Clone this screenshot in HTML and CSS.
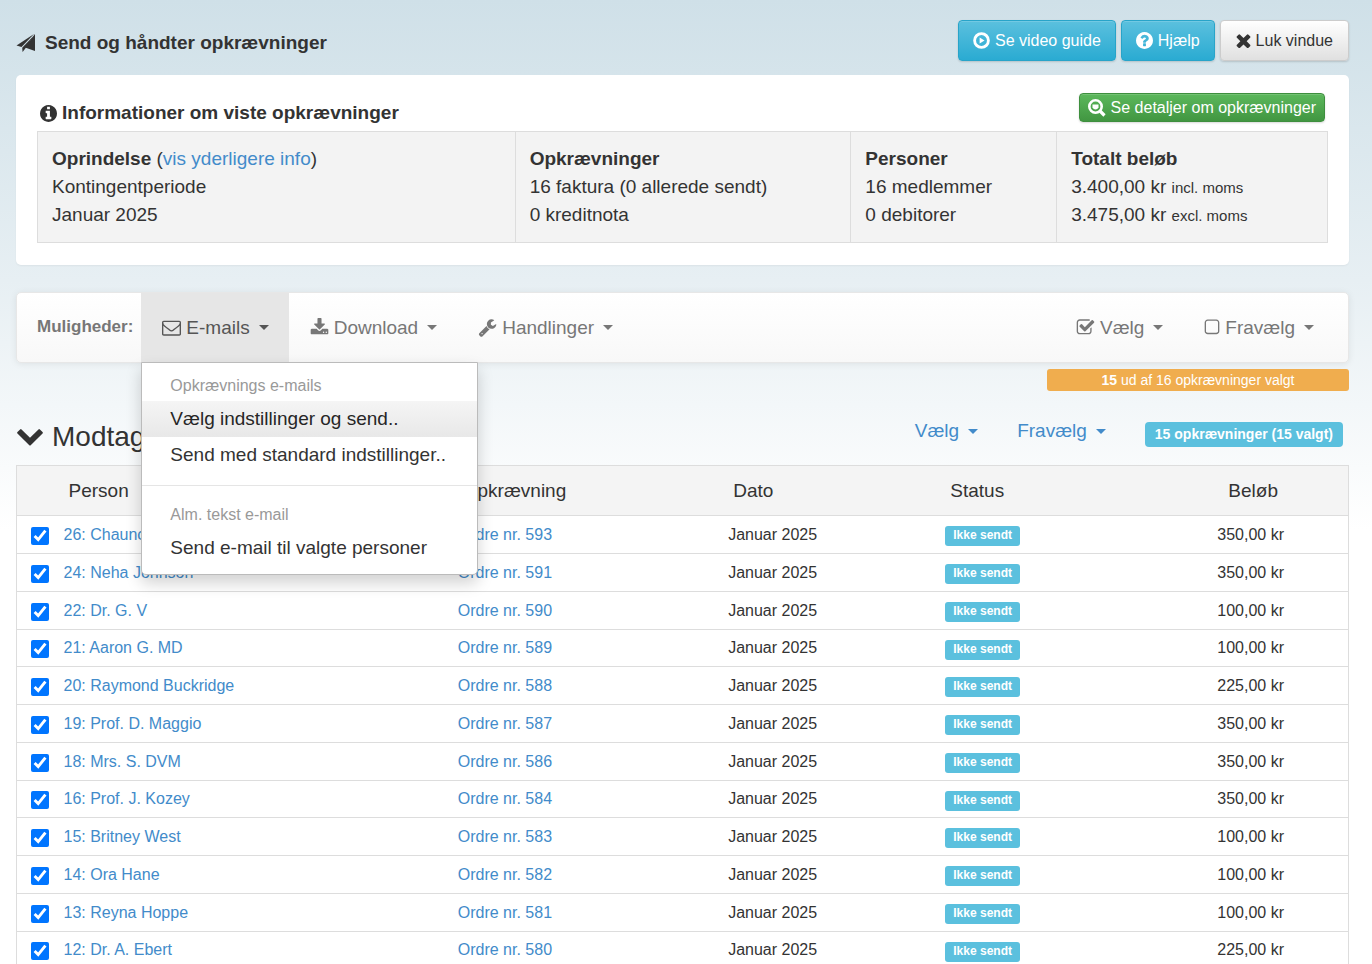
FILE: index.html
```html
<!DOCTYPE html>
<html lang="da">
<head>
<meta charset="utf-8">
<title>Send og håndter opkrævninger</title>
<link rel="stylesheet" href="styles.css">
</head>
<body>
<svg class="sprite" aria-hidden="true">
  <symbol id="i-plane" viewBox="0 0 20 20"><path d="M0.500 12.500L18 1L5.500 14z"/><path d="M19 1V18L9 14.600z"/><path d="M6.200 14.700L18 2.500L9.300 15.500L6.600 19z"/></symbol>
  <symbol id="i-info" viewBox="128 128 1536 1536"><path d="M1152 1376v-160q0-14-9-23t-23-9h-96v-512q0-14-9-23t-23-9h-320q-14 0-23 9t-9 23v160q0 14 9 23t23 9h96v320h-96q-14 0-23 9t-9 23v160q0 14 9 23t23 9h448q14 0 23-9t9-23zm-128-896v-160q0-14-9-23t-23-9h-192q-14 0-23 9t-9 23v160q0 14 9 23t23 9h192q14 0 23-9t9-23zm640 416q0 209-103 385.500t-279.500 279.500-385.500 103-385.500-103-279.500-279.500-103-385.500 103-385.500 279.500-279.500 385.500-103 385.500 103 279.500 279.500 103 385.500z"/></symbol>
  <symbol id="i-question" viewBox="128 128 1536 1536"><path d="M1024 1376v-192q0-14-9-23t-23-9h-192q-14 0-23 9t-9 23v192q0 14 9 23t23 9h192q14 0 23-9t9-23zm256-672q0-88-55.500-163t-138.500-116-170-41q-243 0-371 213-15 24 8 42l132 100q7 6 19 6 16 0 25-12 53-68 86-92 34-24 86-24 48 0 85.500 26t37.500 59q0 38-20 61t-68 45q-63 28-115.500 86.500t-52.500 125.500v36q0 14 9 23t23 9h192q14 0 23-9t9-23q0-19 21.500-49.500t54.500-49.500q32-18 49-28.500t46-35 44.500-48 28-60.500 12.500-81zm384 192q0 209-103 385.500t-279.500 279.500-385.500 103-385.500-103-279.500-279.500-103-385.500 103-385.500 279.500-279.500 385.500-103 385.500 103 279.500 279.500 103 385.500z"/></symbol>
  <symbol id="i-play" viewBox="0 0 18 18"><circle cx="9" cy="9" r="7.300" fill="none" stroke="currentColor" stroke-width="3"/><path d="M7 5.800v6.400L12.200 9z"/></symbol>
  <symbol id="i-times" viewBox="250 250 1292 1292"><path d="M1490 1322q0 40-28 68l-136 136q-28 28-68 28t-68-28l-294-294-294 294q-28 28-68 28t-68-28l-136-136q-28-28-28-68t28-68l294-294-294-294q-28-28-28-68t28-68l136-136q28-28 68-28t68 28l294 294 294-294q28-28 68-28t68 28l136 136q28 28 28 68t-28 68l-294 294 294 294q28 28 28 68z"/></symbol>
  <symbol id="i-search" viewBox="0 0 18 18"><circle cx="7.500" cy="7.500" r="6.200" fill="none" stroke="currentColor" stroke-width="2.600"/><path d="M4.500 5.500h6v3q-1 2-3 2t-3-2z"/><path d="M12 12l4.500 4.500" stroke="currentColor" stroke-width="3.200" fill="none"/></symbol>
  <symbol id="i-mail" viewBox="0 0 1792 1792"><path d="M1664 1504v-768q-32 36-69 66-268 206-426 338-51 43-83 67t-86.500 48.500-102.500 24.500h-2q-48 0-102.500-24.500t-86.500-48.500-83-67q-158-132-426-338-37-30-69-66v768q0 13 9.500 22.500t22.500 9.500h1472q13 0 22.500-9.500t9.500-22.500zm0-1051v-24.500l-.5-13-3-12.500-5.500-9-9-7.500-14-2.500h-1472q-13 0-22.500 9.500t-9.500 22.500q0 168 147 284 193 152 401 317 6 5 35 29.500t46 37.500 44.500 31.500 50.500 27.500 43 9h2q20 0 43-9t50.500-27.500 44.500-31.500 46-37.500 35-29.500q208-165 401-317 54-43 100.500-115.500t46.500-131.500zm128-37v1088q0 66-47 113t-113 47h-1472q-66 0-113-47t-47-113v-1088q0-66 47-113t113-47h1472q66 0 113 47t47 113z"/></symbol>
  <symbol id="i-download" viewBox="0 0 1792 1792"><path d="M1344 1344q0-26-19-45t-45-19-45 19-19 45 19 45 45 19 45-19 19-45zm256 0q0-26-19-45t-45-19-45 19-19 45 19 45 45 19 45-19 19-45zm128-224v320q0 40-28 68t-68 28h-1472q-40 0-68-28t-28-68v-320q0-40 28-68t68-28h465l135 136q58 56 136 56t136-56l136-136h464q40 0 68 28t28 68zm-325-569q17 41-14 70l-448 448q-18 19-45 19t-45-19l-448-448q-31-29-14-70 17-39 59-39h256v-448q0-26 19-45t45-19h256q26 0 45 19t19 45v448h256q42 0 59 39z"/></symbol>
  <symbol id="i-wrench" viewBox="0 0 1792 1792"><path d="M448 1472q0-26-19-45t-45-19-45 19-19 45 19 45 45 19 45-19 19-45zm644-420l-682 682q-37 37-90 37-52 0-91-37l-106-108q-38-36-38-90 0-53 38-91l681-681q39 98 114.500 173.500t173.500 114.500zm634-435q0 39-23 106-47 134-164.500 217.500t-258.500 83.500q-185 0-316.500-131.500t-131.500-316.500 131.500-316.500 316.500-131.500q58 0 121.500 16.500t107.500 46.500q16 11 16 28t-16 28l-293 169v224l193 107q5-3 79-48.500t135.500-81 70.500-35.500q15 0 23.500 10t8.500 25z"/></symbol>
  <symbol id="i-check" viewBox="0 0 1792 1792"><path d="M1472 930v318q0 119-84.500 203.500t-203.500 84.500h-832q-119 0-203.500-84.500t-84.500-203.500v-832q0-119 84.500-203.500t203.500-84.500h832q63 0 117 25 15 7 18 23 3 17-9 29l-49 49q-10 10-23 10-3 0-9-2-23-6-45-6h-832q-66 0-113 47t-47 113v832q0 66 47 113t113 47h832q66 0 113-47t47-113v-254q0-13 9-22l64-64q10-10 23-10 6 0 12 3 20 8 20 29zm231-489l-814 814q-24 24-57 24t-57-24l-430-430q-24-24-24-57t24-57l110-110q24-24 57-24t57 24l263 263 647-647q24-24 57-24t57 24l110 110q24 24 24 57t-24 57z"/></symbol>
  <symbol id="i-square" viewBox="128 0 1536 1792"><path d="M1312 256h-832q-66 0-113 47t-47 113v832q0 66 47 113t113 47h832q66 0 113-47t47-113v-832q0-66-47-113t-113-47zm288 160v832q0 119-84.500 203.500t-203.500 84.500h-832q-119 0-203.500-84.500t-84.500-203.500v-832q0-119 84.500-203.500t203.500-84.500h832q119 0 203.500 84.500t84.500 203.500z"/></symbol>
  <symbol id="i-chevron" viewBox="80 480 1632 1100"><path d="M1683 808l-742 741q-19 19-45 19t-45-19l-742-741q-19-19-19-45.500t19-45.500l166-165q19-19 45-19t45 19l531 531 531-531q19-19 45-19t45 19l166 165q19 19 19 45.500t-19 45.500z"/></symbol>
</svg>

<main class="page">
  <header class="top">
    <h1 class="title"><svg class="icon icon-title"><use href="#i-plane"/></svg>Send og håndter opkrævninger</h1>
    <div class="actions">
      <button class="btn btn-info" type="button"><svg class="icon"><use href="#i-play"/></svg>Se video guide</button>
      <button class="btn btn-info" type="button"><svg class="icon"><use href="#i-question"/></svg>Hjælp</button>
      <button class="btn btn-default" type="button"><svg class="icon icon-small"><use href="#i-times"/></svg>Luk vindue</button>
    </div>
  </header>

  <section class="panel">
    <div class="panel-head">
      <h2 class="panel-title"><svg class="icon"><use href="#i-info"/></svg>Informationer om viste opkrævninger</h2>
      <button class="btn btn-success" type="button"><svg class="icon icon-search"><use href="#i-search"/></svg>Se detaljer om opkrævninger</button>
    </div>
    <div class="summary">
      <div class="fact"><strong>Oprindelse</strong> (<a href="#">vis yderligere info</a>)<br>Kontingentperiode<br>Januar 2025</div>
      <div class="fact"><strong>Opkrævninger</strong><br>16 faktura (0 allerede sendt)<br>0 kreditnota</div>
      <div class="fact"><strong>Personer</strong><br>16 medlemmer<br>0 debitorer</div>
      <div class="fact"><strong>Totalt beløb</strong><br>3.400,00 kr <small>incl. moms</small><br>3.475,00 kr <small>excl. moms</small></div>
    </div>
  </section>

  <nav class="navbar">
    <span class="nav-label">Muligheder:</span>
    <div class="dropdown">
      <button class="nav-item is-open" type="button" aria-expanded="true"><svg class="icon icon-nav"><use href="#i-mail"/></svg>E-mails<span class="caret"></span></button>
      <div class="menu">
        <div class="menu-header">Opkrævnings e-mails</div>
        <a class="menu-link is-active" href="#">Vælg indstillinger og send..</a>
        <a class="menu-link" href="#">Send med standard indstillinger..</a>
        <hr class="menu-divider">
        <div class="menu-header">Alm. tekst e-mail</div>
        <a class="menu-link" href="#">Send e-mail til valgte personer</a>
      </div>
    </div>
    <button class="nav-item" type="button"><svg class="icon icon-nav"><use href="#i-download"/></svg>Download<span class="caret"></span></button>
    <button class="nav-item" type="button"><svg class="icon icon-nav"><use href="#i-wrench"/></svg>Handlinger<span class="caret"></span></button>
    <div class="nav-right">
      <button class="nav-item" type="button"><svg class="icon icon-nav"><use href="#i-check"/></svg>Vælg<span class="caret"></span></button>
      <button class="nav-item" type="button"><svg class="icon icon-box"><use href="#i-square"/></svg>Fravælg<span class="caret"></span></button>
    </div>
  </nav>

  <div class="count"><strong>15</strong> ud af 16 opkrævninger valgt</div>

  <div class="list-head">
    <h2 class="list-title"><svg class="icon icon-chevron"><use href="#i-chevron"/></svg>Modtagere</h2>
    <button class="link-btn" type="button">Vælg<span class="caret"></span></button>
    <button class="link-btn" type="button">Fravælg<span class="caret"></span></button>
    <span class="total">15 opkrævninger (15 valgt)</span>
  </div>

  <table class="list">
    <colgroup><col class="c-check"><col class="c-person"><col class="c-order"><col class="c-date"><col class="c-status"><col></colgroup>
    <thead>
      <tr><th></th><th>Person</th><th>Opkrævning</th><th>Dato</th><th>Status</th><th class="amount">Beløb</th></tr>
    </thead>
    <tbody>
      <tr><td><input type="checkbox" checked aria-label="Vælg 26"></td><td><a href="#">26: Chauncey Kling</a></td><td><a href="#">Ordre nr. 593</a></td><td>Januar 2025</td><td><span class="label">Ikke sendt</span></td><td class="amount">350,00 kr</td></tr>
      <tr><td><input type="checkbox" checked aria-label="Vælg 24"></td><td><a href="#">24: Neha Johnson</a></td><td><a href="#">Ordre nr. 591</a></td><td>Januar 2025</td><td><span class="label">Ikke sendt</span></td><td class="amount">350,00 kr</td></tr>
      <tr><td><input type="checkbox" checked aria-label="Vælg 22"></td><td><a href="#">22: Dr. G. V</a></td><td><a href="#">Ordre nr. 590</a></td><td>Januar 2025</td><td><span class="label">Ikke sendt</span></td><td class="amount">100,00 kr</td></tr>
      <tr><td><input type="checkbox" checked aria-label="Vælg 21"></td><td><a href="#">21: Aaron G. MD</a></td><td><a href="#">Ordre nr. 589</a></td><td>Januar 2025</td><td><span class="label">Ikke sendt</span></td><td class="amount">100,00 kr</td></tr>
      <tr><td><input type="checkbox" checked aria-label="Vælg 20"></td><td><a href="#">20: Raymond Buckridge</a></td><td><a href="#">Ordre nr. 588</a></td><td>Januar 2025</td><td><span class="label">Ikke sendt</span></td><td class="amount">225,00 kr</td></tr>
      <tr><td><input type="checkbox" checked aria-label="Vælg 19"></td><td><a href="#">19: Prof. D. Maggio</a></td><td><a href="#">Ordre nr. 587</a></td><td>Januar 2025</td><td><span class="label">Ikke sendt</span></td><td class="amount">350,00 kr</td></tr>
      <tr><td><input type="checkbox" checked aria-label="Vælg 18"></td><td><a href="#">18: Mrs. S. DVM</a></td><td><a href="#">Ordre nr. 586</a></td><td>Januar 2025</td><td><span class="label">Ikke sendt</span></td><td class="amount">350,00 kr</td></tr>
      <tr><td><input type="checkbox" checked aria-label="Vælg 16"></td><td><a href="#">16: Prof. J. Kozey</a></td><td><a href="#">Ordre nr. 584</a></td><td>Januar 2025</td><td><span class="label">Ikke sendt</span></td><td class="amount">350,00 kr</td></tr>
      <tr><td><input type="checkbox" checked aria-label="Vælg 15"></td><td><a href="#">15: Britney West</a></td><td><a href="#">Ordre nr. 583</a></td><td>Januar 2025</td><td><span class="label">Ikke sendt</span></td><td class="amount">100,00 kr</td></tr>
      <tr><td><input type="checkbox" checked aria-label="Vælg 14"></td><td><a href="#">14: Ora Hane</a></td><td><a href="#">Ordre nr. 582</a></td><td>Januar 2025</td><td><span class="label">Ikke sendt</span></td><td class="amount">100,00 kr</td></tr>
      <tr><td><input type="checkbox" checked aria-label="Vælg 13"></td><td><a href="#">13: Reyna Hoppe</a></td><td><a href="#">Ordre nr. 581</a></td><td>Januar 2025</td><td><span class="label">Ikke sendt</span></td><td class="amount">100,00 kr</td></tr>
      <tr><td><input type="checkbox" checked aria-label="Vælg 12"></td><td><a href="#">12: Dr. A. Ebert</a></td><td><a href="#">Ordre nr. 580</a></td><td>Januar 2025</td><td><span class="label">Ikke sendt</span></td><td class="amount">225,00 kr</td></tr>
    </tbody>
  </table>
</main>
</body>
</html>
```

FILE: styles.css
```css
* { box-sizing: border-box; }

body {
  margin: 0;
  background: #fff;
  color: #333;
  font-family: "Liberation Sans", Arial, sans-serif;
  font-size: 19px;
  line-height: 28px;
}

a { color: #428bca; text-decoration: none; }
button { font-family: inherit; cursor: pointer; }
h1, h2 { margin: 0; }

.sprite { display: none; }
.icon { width: 17px; height: 17px; flex: none; fill: currentColor; }

.page {
  height: 100vh;
  overflow: hidden;
  padding: 20px 23px 0 16px;
  background: linear-gradient(#cfe0e8, #e7eff3 280px, #fff 530px);
}

/* Top bar */
.top { display: flex; align-items: center; justify-content: space-between; margin-bottom: 14px; }
.title { display: flex; align-items: center; gap: 9px; padding-top: 4px; font-size: 19px; }
.icon-title { width: 20px; height: 20px; }
.actions { display: flex; gap: 5px; }

.btn {
  display: flex;
  align-items: center;
  gap: 5px;
  padding: 0 14px;
  border: 1px solid;
  border-radius: 4px;
  font-size: 16px;
  line-height: 39px;
  box-shadow: inset 0 1px 0 rgba(255, 255, 255, .15), 0 1px 2px rgba(0, 0, 0, .15);
}
.btn-info { color: #fff; border-color: #28a4c9; background: linear-gradient(#5bc0de, #2aabd2); }
.btn-default { padding: 0 15px; color: #333; border-color: #ccc; background: linear-gradient(#fff, #e0e0e0); }
.btn-success { padding: 0 8px; line-height: 27px; color: #fff; border-color: #3e8f3e; background: linear-gradient(#5cb85c, #419641); }
.icon-small { width: 15px; height: 15px; }
.icon-search { width: 18px; height: 18px; }

/* Info panel */
.panel { padding: 18px 21px 22px; border-radius: 5px; background: #fff; box-shadow: 0 1px 2px rgba(0, 0, 0, .05); }
.panel-head { display: flex; justify-content: space-between; align-items: flex-start; padding: 0 3px 4px; }
.panel-title { display: flex; align-items: center; gap: 5px; padding-top: 6px; font-size: 19px; }
.summary { display: grid; grid-template-columns: 477fr 336fr 206fr 271fr; border: 1px solid #ddd; background: #f3f3f3; }
.fact { padding: 13px 14px; }
.fact + .fact { border-left: 1px solid #ddd; }
.fact small { font-size: 15px; line-height: 1; }

/* Options bar */
.navbar {
  display: flex;
  margin-top: 27px;
  border: 1px solid #e7e7e7;
  border-radius: 5px;
  background: linear-gradient(#fff, #f8f8f8);
  box-shadow: 0 1px 7px rgba(0, 0, 0, .08);
}
.nav-label { padding: 0 8px 0 20px; color: #777; font-size: 17px; font-weight: bold; line-height: 68px; }
.nav-item {
  display: flex;
  align-items: center;
  gap: 5px;
  padding: 0 20px 0 21px;
  border: 0;
  background: none;
  color: #777;
  font-size: 19px;
  line-height: 69px;
}
.nav-item.is-open { color: #555; background: #e6e6e6; }
.icon-nav { width: 19px; height: 19px; }
.icon-box { width: 16px; height: 19px; }
.nav-right { display: flex; margin-left: auto; padding-right: 14px; }
.caret { margin-left: 4px; border: 5px solid transparent; border-top-color: currentColor; border-bottom: 0; }

.dropdown { position: relative; }
.menu {
  position: absolute;
  top: 100%;
  left: 0;
  z-index: 5;
  min-width: 337px;
  padding: 5px 0 8px;
  border: 1px solid #bbb;
  border-radius: 0 0 5px 5px;
  background: #fff;
  box-shadow: 0 8px 16px rgba(0, 0, 0, .18);
  white-space: nowrap;
}
.menu-header { padding: 4px 28px 1px; color: #999; font-size: 16px; }
.menu-link { display: block; padding: 4px 28px; color: #333; }
.menu-link.is-active { color: #262626; background: linear-gradient(#f5f5f5, #e8e8e8); }
.menu-divider { margin: 12px 0 11px; border: 0; border-top: 1px solid #e5e5e5; }

/* Selection state and list heading */
.count {
  width: 302px;
  margin: 6px 0 0 auto;
  border-radius: 3px;
  background: #f0ad4e;
  color: #fff;
  font-size: 14px;
  line-height: 22px;
  text-align: center;
}
.list-head { display: flex; align-items: center; gap: 39px; padding: 26px 6px 8px 1px; }
.list-title { display: flex; align-items: center; gap: 9px; margin-right: auto; font-size: 28px; font-weight: normal; line-height: 40px; }
.icon-chevron { width: 26px; height: 18px; }
.link-btn { display: flex; align-items: center; gap: 5px; padding: 0 0 12px; border: 0; background: none; color: #428bca; font-size: 19px; line-height: 28px; }
.total { margin-bottom: 6px; padding: 0 10px; border-radius: 4px; background: #5bc0de; color: #fff; font-size: 14px; font-weight: bold; line-height: 25px; }

/* Recipients */
.list { width: 100%; table-layout: fixed; border-collapse: collapse; border: 1px solid #ddd; background: #fff; font-size: 16px; line-height: 22px; }
.c-check { width: 35px; }
.c-person { width: 29.6%; }
.c-order { width: 20.3%; }
.c-date { width: 16.3%; }
.c-status { width: 16%; }
.list th { height: 50px; padding: 0 17px; background: #f4f4f4; font-size: 19px; font-weight: normal; text-align: left; }
.list td { height: 38px; padding: 0 12px; border-top: 1px solid #ddd; }
.list tr:nth-child(4n) td { height: 37px; }
.list .amount { padding-right: 64px; text-align: right; }
.list th.amount { padding-right: 70px; }
.list input { display: block; width: 18px; height: 18px; margin: 2px 0 0 2px; accent-color: #0075ff; }
.label { display: inline-block; margin-top: 3px; padding: 0 8px 2px; border-radius: 3px; background: #5bc0de; color: #fff; font-size: 12px; font-weight: bold; line-height: 18px; vertical-align: middle; }
```
